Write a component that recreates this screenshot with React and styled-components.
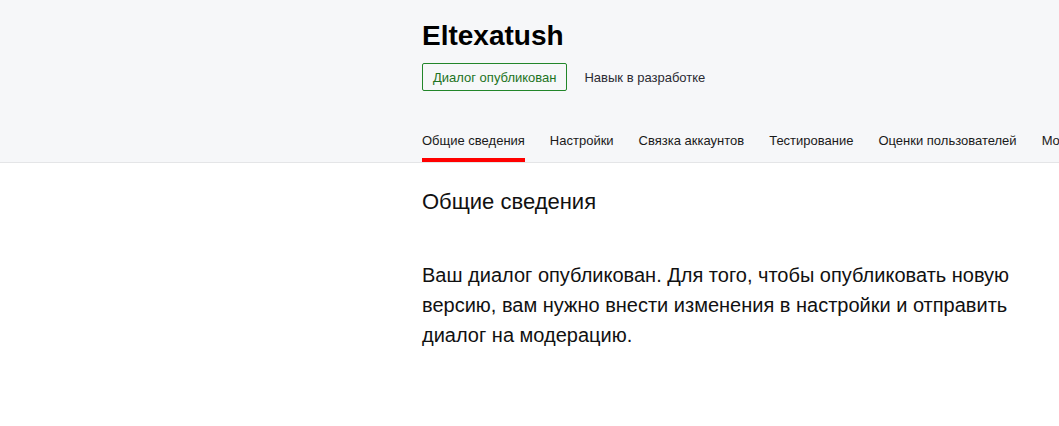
import React from "react";
import styled, { createGlobalStyle } from "styled-components";

const GlobalStyle = createGlobalStyle`
  html, body {
    margin: 0;
    padding: 0;
    background: #fff;
    font-family: "Liberation Sans", Arial, sans-serif;
    color: #000;
  }
`;

const tabs = [
  "Общие сведения",
  "Настройки",
  "Связка аккаунтов",
  "Тестирование",
  "Оценки пользователей",
  "Мониторинг",
];

const App = () => {
  return (
    <Page>
      <GlobalStyle />
      <Header>
        <Inner>
          <Title>Eltexatush</Title>
          <StatusRow>
            <Badge>Диалог опубликован</Badge>
            <StatusText>Навык в разработке</StatusText>
          </StatusRow>
          <Tabs>
            {tabs.map((t, i) => (
              <Tab key={t} $active={i === 0}>
                {t}
              </Tab>
            ))}
          </Tabs>
        </Inner>
      </Header>
      <Content>
        <Heading>Общие сведения</Heading>
        <Text>
          Ваш диалог опубликован. Для того, чтобы опубликовать новую версию,
          вам нужно внести изменения в настройки и отправить диалог на
          модерацию.
        </Text>
      </Content>
    </Page>
  );
};

const Page = styled.div`
  width: 100%;
  min-height: 426px;
  overflow: hidden;
`;

const Header = styled.header`
  background: #f6f7f9;
  border-bottom: 1px solid #e4e5e7;
`;

const Inner = styled.div`
  padding: 20px 0 0 422px;
`;

const Title = styled.h1`
  margin: 0;
  font-size: 28px;
  line-height: 32px;
  font-weight: 700;
  color: #000;
`;

const StatusRow = styled.div`
  display: flex;
  align-items: center;
  gap: 17px;
  margin-top: 11px;
`;

const Badge = styled.span`
  box-sizing: border-box;
  height: 28px;
  display: inline-flex;
  align-items: center;
  padding: 0 10px;
  border: 1px solid #22862a;
  border-radius: 2px;
  font-size: 13px;
  color: #1d7323;
`;

const StatusText = styled.span`
  font-size: 13px;
  color: #2b2b33;
`;

const Tabs = styled.nav`
  display: flex;
  gap: 25px;
  margin-top: 42px;
  white-space: nowrap;
`;

const Tab = styled.div`
  position: relative;
  flex-shrink: 0;
  font-size: 13px;
  line-height: 16px;
  padding-bottom: 13px;
  color: #1a1a1a;
  cursor: pointer;

  &::after {
    content: "";
    position: absolute;
    left: 0;
    right: 0;
    bottom: 0;
    height: 4px;
    background: ${(p) => (p.$active ? "#ff0000" : "transparent")};
  }
`;

const Content = styled.main`
  padding: 25px 0 0 422px;
`;

const Heading = styled.h2`
  margin: 0;
  font-size: 22px;
  line-height: 28px;
  font-weight: 400;
  color: #111;
`;

const Text = styled.p`
  margin: 44px 0 0;
  max-width: 600px;
  font-size: 20px;
  line-height: 30px;
  color: #111;
`;

export default App;
